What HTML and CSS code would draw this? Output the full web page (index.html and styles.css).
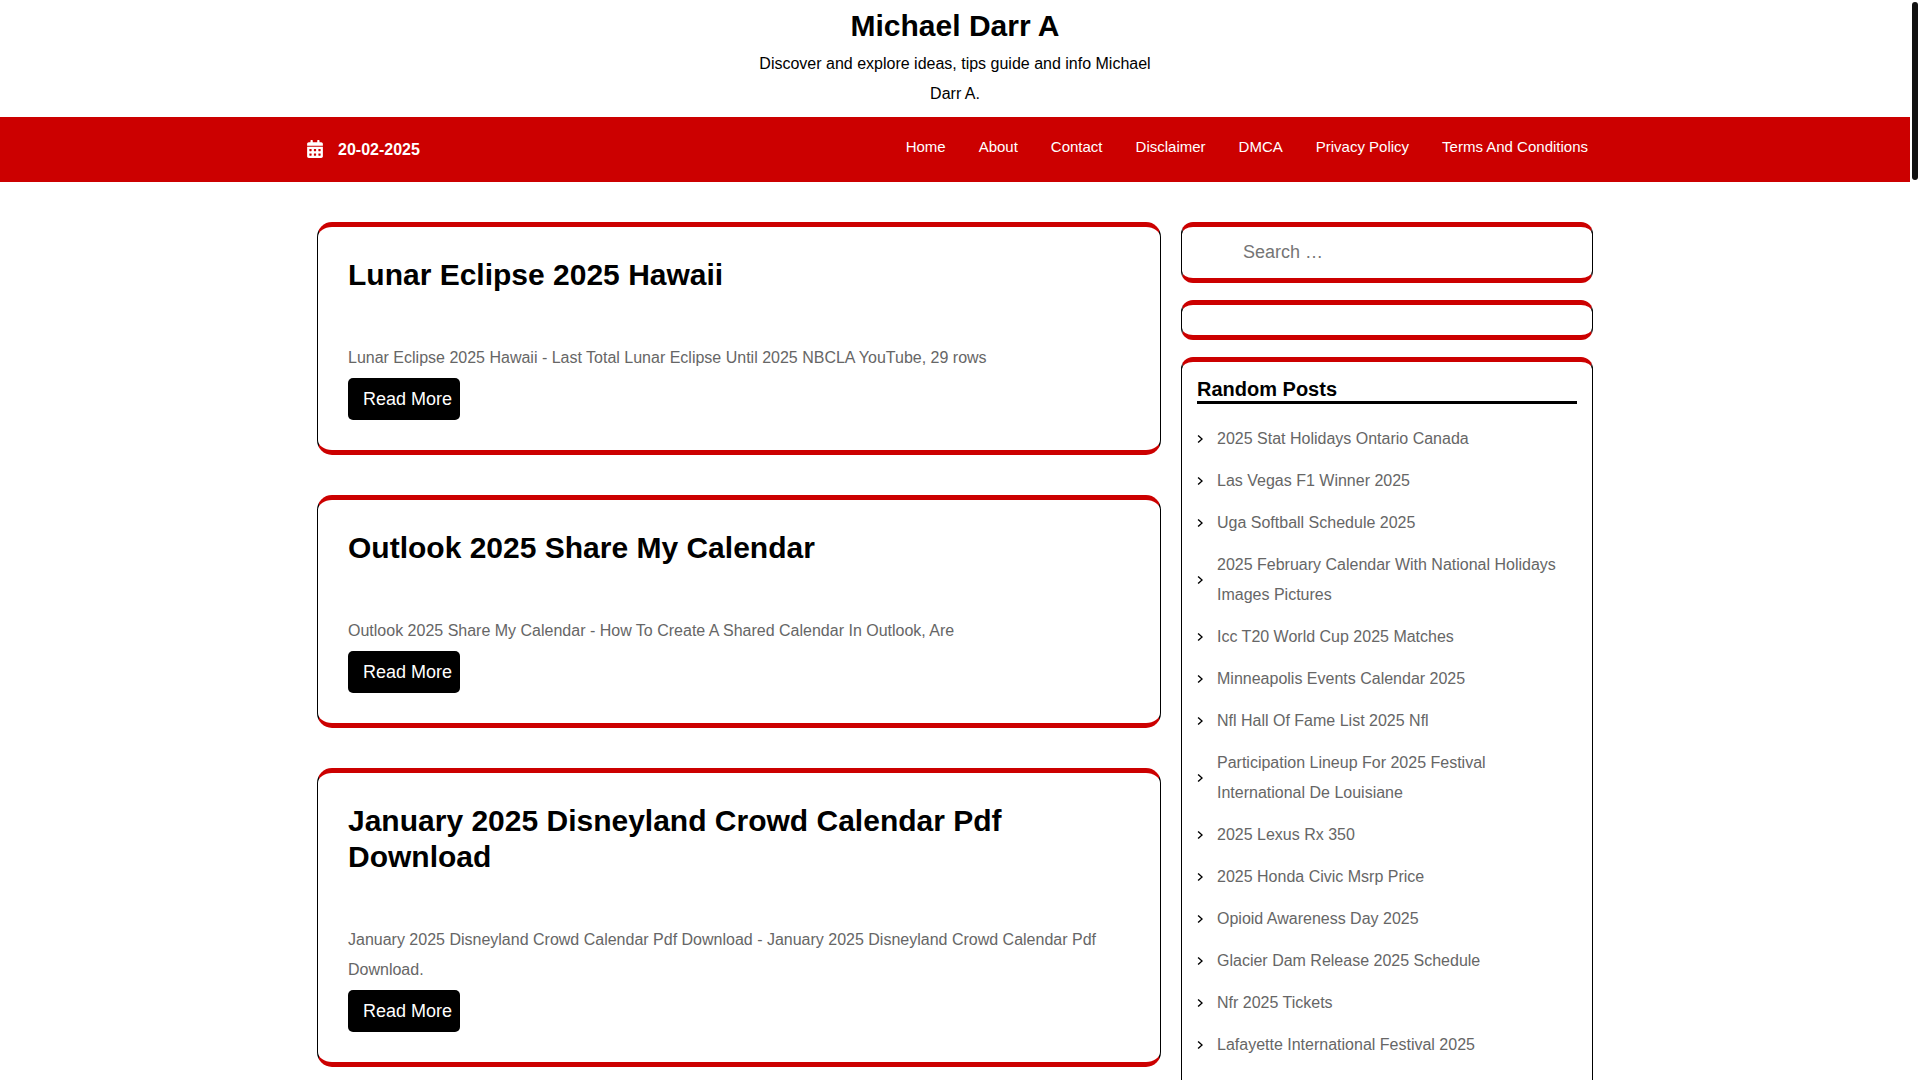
FILE: index.html
```html
<!DOCTYPE html>
<html lang="en">
<head>
<meta charset="utf-8">
<meta name="viewport" content="width=device-width, initial-scale=1">
<title>Michael Darr A</title>
<link rel="stylesheet" href="styles.css">
</head>
<body>
<header class="site-header">
  <h1 class="site-title"><a href="#">Michael Darr A</a></h1>
  <p class="site-tagline">Discover and explore ideas, tips guide and info Michael Darr A.</p>
</header>
<div class="topbar">
  <div class="container topbar-inner">
    <div class="date">
      <svg class="date-icon" viewBox="0 0 448 512" aria-hidden="true"><path fill="currentColor" d="M0 464c0 26.500 21.500 48 48 48h352c26.500 0 48-21.500 48-48V192H0v272zm320-196c0-6.600 5.400-12 12-12h40c6.600 0 12 5.400 12 12v40c0 6.600-5.400 12-12 12h-40c-6.600 0-12-5.400-12-12v-40zm0 128c0-6.600 5.400-12 12-12h40c6.600 0 12 5.400 12 12v40c0 6.600-5.400 12-12 12h-40c-6.600 0-12-5.400-12-12v-40zM192 268c0-6.600 5.400-12 12-12h40c6.600 0 12 5.400 12 12v40c0 6.600-5.400 12-12 12h-40c-6.600 0-12-5.400-12-12v-40zm0 128c0-6.600 5.400-12 12-12h40c6.600 0 12 5.400 12 12v40c0 6.600-5.400 12-12 12h-40c-6.600 0-12-5.400-12-12v-40zM64 268c0-6.600 5.400-12 12-12h40c6.600 0 12 5.400 12 12v40c0 6.600-5.400 12-12 12H76c-6.600 0-12-5.400-12-12v-40zm0 128c0-6.600 5.400-12 12-12h40c6.600 0 12 5.400 12 12v40c0 6.600-5.400 12-12 12H76c-6.600 0-12-5.400-12-12v-40zM400 64h-48V16c0-8.800-7.200-16-16-16h-32c-8.800 0-16 7.200-16 16v48H160V16c0-8.800-7.200-16-16-16h-32c-8.800 0-16 7.200-16 16v48H48C21.500 64 0 85.500 0 112v48h448v-48c0-26.500-21.500-48-48-48z"/></svg>
      <span>20-02-2025</span>
    </div>
    <nav class="menu" aria-label="Main">
      <a href="#">Home</a>
      <a href="#">About</a>
      <a href="#">Contact</a>
      <a href="#">Disclaimer</a>
      <a href="#">DMCA</a>
      <a href="#">Privacy Policy</a>
      <a href="#">Terms And Conditions</a>
    </nav>
  </div>
</div>
<div class="container content">
  <main class="posts">
    <article class="post">
      <h2 class="post-title"><a href="#">Lunar Eclipse 2025 Hawaii</a></h2>
      <p class="post-text">Lunar Eclipse 2025 Hawaii - Last Total Lunar Eclipse Until 2025 NBCLA YouTube, 29 rows</p>
      <a class="read-more" href="#">Read More</a>
    </article>
    <article class="post">
      <h2 class="post-title"><a href="#">Outlook 2025 Share My Calendar</a></h2>
      <p class="post-text">Outlook 2025 Share My Calendar - How To Create A Shared Calendar In Outlook, Are</p>
      <a class="read-more" href="#">Read More</a>
    </article>
    <article class="post">
      <h2 class="post-title"><a href="#">January 2025 Disneyland Crowd Calendar Pdf Download</a></h2>
      <p class="post-text">January 2025 Disneyland Crowd Calendar Pdf Download - January 2025 Disneyland Crowd Calendar Pdf Download.</p>
      <a class="read-more" href="#">Read More</a>
    </article>
  </main>
  <aside class="sidebar">
    <form class="widget widget-search" role="search">
      <input class="search-field" type="search" placeholder="Search …" aria-label="Search">
    </form>
    <div class="widget widget-empty"></div>
    <section class="widget widget-posts">
      <h3 class="widget-title">Random Posts</h3>
      <ul class="links">
        <li><a href="#">2025 Stat Holidays Ontario Canada</a></li>
        <li><a href="#">Las Vegas F1 Winner 2025</a></li>
        <li><a href="#">Uga Softball Schedule 2025</a></li>
        <li><a href="#">2025 February Calendar With National Holidays Images Pictures</a></li>
        <li><a href="#">Icc T20 World Cup 2025 Matches</a></li>
        <li><a href="#">Minneapolis Events Calendar 2025</a></li>
        <li><a href="#">Nfl Hall Of Fame List 2025 Nfl</a></li>
        <li><a href="#">Participation Lineup For 2025 Festival International De Louisiane</a></li>
        <li><a href="#">2025 Lexus Rx 350</a></li>
        <li><a href="#">2025 Honda Civic Msrp Price</a></li>
        <li><a href="#">Opioid Awareness Day 2025</a></li>
        <li><a href="#">Glacier Dam Release 2025 Schedule</a></li>
        <li><a href="#">Nfr 2025 Tickets</a></li>
        <li><a href="#">Lafayette International Festival 2025</a></li>
      </ul>
    </section>
  </aside>
</div>
<div class="scroll-track" aria-hidden="true"><div class="scroll-thumb"></div></div>
</body>
</html>
```
FILE: styles.css
```css
* {
  box-sizing: border-box;
}

body {
  margin: 0;
  padding-right: 10px;
  height: 100vh;
  overflow: hidden;
  background: #fff;
  color: #000;
  font: 16px/30px "Liberation Sans", Arial, sans-serif;
}

h1, h2, h3, p, ul {
  margin: 0;
  padding: 0;
}

a {
  color: inherit;
  text-decoration: none;
}

.container {
  max-width: 1320px;
  margin: 0 auto;
}

/* Header */
.site-header {
  padding: 8px 12px;
  text-align: center;
}

.site-title {
  margin-bottom: 5px;
  font-size: 30px;
  line-height: 36px;
}

.site-tagline {
  max-width: 416px;
  margin: 0 auto;
}

.topbar {
  background: #c00;
  color: #fff;
}

.topbar-inner {
  display: flex;
  justify-content: space-between;
  align-items: flex-start;
  padding: 15px 12px 17px;
}

.date {
  display: flex;
  align-items: center;
  gap: 15px;
  padding-top: 3px;
  font-weight: bold;
}

.date-icon {
  width: 16px;
  height: 18px;
  margin-bottom: 2px;
}

.menu {
  display: flex;
  gap: 33px;
  padding-right: 15px;
  font-size: 15px;
}

/* Posts and sidebar */
.content {
  display: grid;
  grid-template-columns: 211fr 103fr;
  align-items: start;
  gap: 20px;
  padding: 40px 22px;
}

.posts {
  display: grid;
  gap: 40px;
}

.post,
.widget {
  border: solid;
  border-width: 5px 1px;
  border-color: #c00 #000;
}

.post {
  padding: 30px;
  border-radius: 15px;
}

.post-title {
  margin-bottom: 50px;
  font-size: 30px;
  line-height: 36px;
}

.post-text {
  margin-bottom: 5px;
  color: #666;
}

.read-more {
  display: block;
  width: fit-content;
  padding: 6px 8px 6px 15px;
  border-radius: 5px;
  background: #000;
  color: #fff;
  font-size: 18px;
}

.sidebar {
  display: grid;
  gap: 17px;
}

.widget {
  min-height: 40px;
  padding: 15px;
  border-radius: 12px;
}

.widget-search {
  padding: 10px 15px 11px 61px;
}

.search-field {
  display: block;
  width: 100%;
  height: 30px;
  padding: 0;
  border: 0;
  background: none;
  font: inherit;
  font-size: 18px;
  appearance: none;
}

.search-field::placeholder {
  color: #757575;
}

.widget-title {
  margin-bottom: 20px;
  border-bottom: 3px solid #000;
  font-size: 20px;
  line-height: 24px;
}

.links {
  display: grid;
  gap: 12px;
  padding-bottom: 60px;
  list-style: none;
  color: #666;
}

.links li {
  display: flex;
  align-items: center;
  gap: 14px;
}

.links li::before {
  content: "";
  flex: none;
  width: 6px;
  height: 8px;
  background: #000;
  clip-path: polygon(10% 12%, 27% 0, 100% 50%, 27% 100%, 10% 88%, 68% 50%);
}

/* Page scroll indicator */
.scroll-track {
  position: fixed;
  top: 0;
  right: 0;
  bottom: 0;
  width: 10px;
  padding: 2px;
}

.scroll-thumb {
  height: 178px;
  border-radius: 3px;
  background: #111;
}
```
